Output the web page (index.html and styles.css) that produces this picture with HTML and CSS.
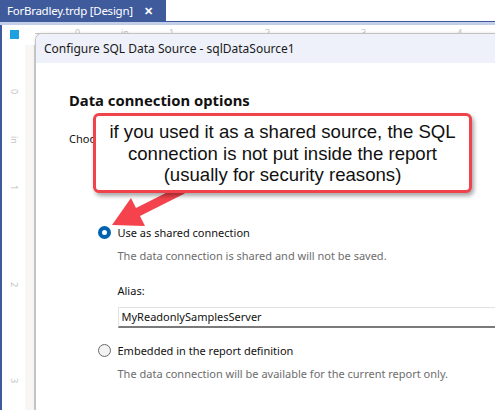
FILE: index.html
```html
<!DOCTYPE html>
<html>
<head>
<meta charset="utf-8">
<link rel="stylesheet" href="styles.css">
</head>
<body>
<div class="tabbar">
  <div class="tab"><span class="tab-title">ForBradley.trdp [Design]</span><span class="tab-close">✕</span></div>
</div>
<div class="tabline"></div>
<div class="designer">
  <div class="vruler">
    <span class="vmark m0">0</span>
    <span class="vmark min">in</span>
    <span class="vmark m1">1</span>
    <span class="vmark m2">2</span>
    <span class="vmark m3">3</span>
    <span class="corner-mark"></span>
  </div>
  <div class="margin-strip"></div>
  <div class="hruler">
    <span class="hmark h0">0</span>
    <span class="hmark hin">in</span>
    <span class="hmark h1">1</span>
    <span class="hmark h2">2</span>
    <span class="hmark h3">3</span>
    <span class="hmark h4">4</span>
  </div>

  <div class="dialog">
    <div class="dialog-title">Configure SQL Data Source - sqlDataSource1</div>
    <div class="dialog-body">
      <h2 class="heading">Data connection options</h2>
      <p class="prompt">Choose how to store the data connection:</p>
      <div class="options">
        <div class="option"><span class="radio checked"></span><span class="option-label">Use as shared connection</span></div>
        <p class="desc">The data connection is shared and will not be saved.</p>
        <div class="alias">
          <div class="field-label">Alias:</div>
          <div class="input">MyReadonlySamplesServer</div>
        </div>
        <div class="option second"><span class="radio"></span><span class="option-label">Embedded in the report definition</span></div>
        <p class="desc">The data connection will be available for the current report only.</p>
      </div>
    </div>
  </div>

  <svg class="arrow" width="495" height="410" viewBox="0 0 495 410">
    <polygon points="112,225 131,198 136,208 180.7,185.6 184.7,193.6 140,216 145,226" />
  </svg>
  <div class="callout">if you used it as a shared source, the SQL<br>connection is not put inside the report<br>(usually for security reasons)</div>
</div>
</body>
</html>
```

FILE: styles.css
```css
html, body {
  margin: 0;
  padding: 0;
}
body {
  width: 495px;
  height: 410px;
  overflow: hidden;
  background: #ffffff;
  font-family: "Noto Sans", "Open Sans", sans-serif;
  position: relative;
}

.tabbar {
  height: 21px;
  display: flex;
  background: #ffffff;
}
.tab {
  width: 166px;
  background: #3f5b9c;
  color: #ffffff;
  display: flex;
  align-items: center;
  box-sizing: border-box;
  padding-left: 7px;
  font-size: 11.5px;
  letter-spacing: -0.25px;
  height: 21px;
}
.tab-title {
  flex: 0 0 auto;
  line-height: 18px;
}
.tab-close {
  margin-left: 11px;
  font-size: 11px;
  font-weight: bold;
  line-height: 18px;
}

.tabline {
  height: 3px;
  border-top: 1px solid #3f5b9c;
  background: #c3cee8;
}

.designer {
  height: 385px;
  border-left: 2px solid #3f5b9c;
  display: grid;
  grid-template-columns: 23px 10px 1fr;
  grid-template-rows: 9px 1fr;
  background: #ffffff;
}

.vruler {
  grid-column: 1;
  grid-row: 1 / 3;
  position: relative;
}
.corner-mark {
  position: absolute;
  left: 8px;
  top: 5px;
  width: 9px;
  height: 9px;
  background: #1fa0e0;
}
.vmark {
  position: absolute;
  left: 8px;
  writing-mode: vertical-rl;
  font-size: 9px;
  line-height: 9px;
  color: #c4c4c4;
}
.m0 { top: 64px; }
.min { top: 111px; }
.m1 { top: 160px; }
.m2 { top: 257px; }
.m3 { top: 353px; }

.margin-strip {
  grid-column: 2;
  grid-row: 2;
  margin-top: 11px;
  background: #f8f7f4;
  border-right: 1px solid #cfcfcf;
}

.hruler {
  grid-column: 3;
  grid-row: 1;
  border-bottom: 1px solid #c8c8c8;
  position: relative;
}
.hmark {
  position: absolute;
  top: 3px;
  font-size: 9px;
  line-height: 9px;
  color: #c4c4c4;
}
.h0 { left: 40px; }
.hin { left: 86px; }
.h1 { left: 134px; }
.h2 { left: 230px; }
.h3 { left: 326px; }
.h4 { left: 422px; }

.dialog {
  position: absolute;
  left: 35px;
  top: 33px;
  width: 460px;
  height: 377px;
  box-sizing: border-box;
  background: #ffffff;
  border: 1px solid #c2c2c2;
  border-right: none;
  border-bottom: none;
  border-top-left-radius: 7px;
  box-shadow: 0 0 3px rgba(0, 0, 0, 0.12);
  overflow: hidden;
}
.dialog-title {
  height: 29px;
  background: #eef1f9;
  display: flex;
  align-items: center;
  padding-left: 8px;
  font-size: 12px;
  color: #1a1a1a;
}
.dialog-body {
  padding: 27px 0 0 33px;
}
.heading {
  margin: 0;
  font-size: 14.8px;
  line-height: 20px;
  font-weight: bold;
  color: #111111;
}
.prompt {
  margin: 21px 0 0;
  font-size: 11px;
  line-height: 16px;
  color: #111111;
}
.options {
  margin: 77px 0 0 28.5px;
}
.option {
  display: flex;
  align-items: center;
  gap: 7px;
  height: 16px;
  font-size: 11px;
  color: #111111;
}
.option.second {
  margin-top: 14px;
}
.radio {
  width: 13px;
  height: 13px;
  box-sizing: border-box;
  border-radius: 50%;
  border: 1px solid #6a6a6a;
  background: #f2f2f2;
}
.radio.checked {
  border: 4px solid #0063b1;
  background: #ffffff;
}
.desc {
  margin: 8px 0 0 20px;
  font-size: 11px;
  line-height: 16px;
  color: #6d6d6d;
}
.alias {
  margin: 19px 0 0 20px;
}
.field-label {
  font-size: 11px;
  line-height: 16px;
  color: #111111;
}
.input {
  margin-top: 8px;
  height: 21px;
  box-sizing: border-box;
  border: 1px solid #e2e2e2;
  border-bottom: 2px solid #7a7a7a;
  border-right: none;
  padding-left: 3px;
  font-size: 11px;
  line-height: 18px;
  color: #111111;
}

.arrow {
  position: absolute;
  left: 0;
  top: 0;
  fill: #f4434c;
}
.callout {
  position: absolute;
  left: 93px;
  top: 113px;
  width: 379px;
  height: 80px;
  box-sizing: border-box;
  border: 3px solid #f0434c;
  border-radius: 6px;
  background: #ffffff;
  box-shadow: 2px 3px 4px rgba(0, 0, 0, 0.35);
  padding-top: 5px;
  text-align: center;
  font-family: "Liberation Sans", Arial, sans-serif;
  font-size: 18.6px;
  line-height: 21.5px;
  color: #111111;
}
```
